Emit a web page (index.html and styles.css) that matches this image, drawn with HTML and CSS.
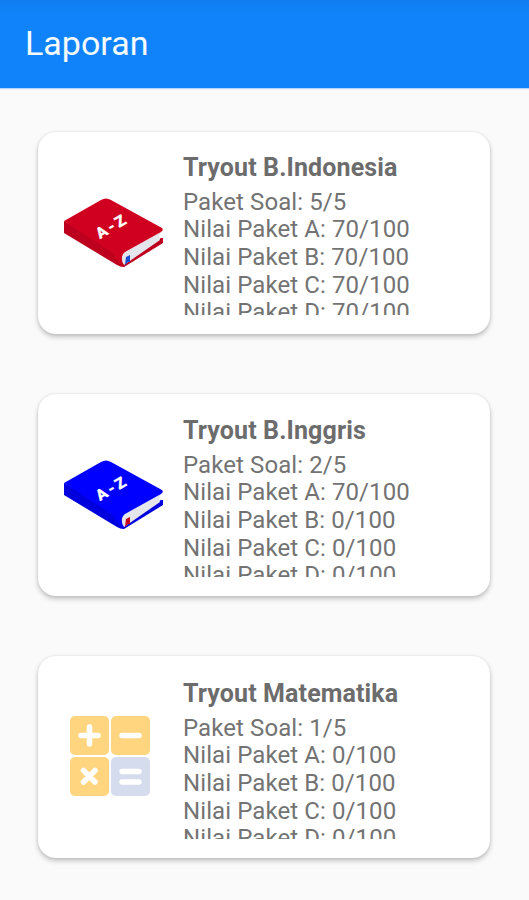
FILE: index.html
```html
<!DOCTYPE html>
<html lang="id">
<head>
<meta charset="utf-8">
<title>Laporan</title>
<link rel="stylesheet" href="styles.css">
</head>
<body>
<header class="appbar"><h1>Laporan</h1></header>
<main class="list">
  <article class="card">
    <svg class="icon book-red" viewBox="0 0 100 72">
      <path class="spine" d="M1 24 L56 54 L61 60 L61 70 Q57 70 54 68 L1 36 Z"/>
      <path class="back" d="M58 62 L98 41 L100 41 V46 L61 70 L57 68 Z"/>
      <path class="pages" d="M60 56 L98 35 Q95 39 97 43 L61 68 Q57 62 60 56 Z"/>
      <path class="cover" d="M1 24 L38 3 Q43 0 48 3 L99 31 Q101 33 98 35 L62 55 Q57 59 59 68 Q54 64 50 56 Z"/>
      <path class="mark" d="M63 60 L67 58 V65 L65 65 L62 68 Z"/>
      <text class="az" transform="matrix(.86 -.5 .55 .8 37 42)">A-Z</text>
    </svg>
    <div class="info">
      <h2>Tryout B.Indonesia</h2>
      <div class="scores"><p>Paket Soal: 5/5</p><p>Nilai Paket A: 70/100</p><p>Nilai Paket B: 70/100</p><p>Nilai Paket C: 70/100</p><p>Nilai Paket D: 70/100</p></div>
    </div>
  </article>
  <article class="card">
    <svg class="icon book-blue" viewBox="0 0 100 72">
      <path class="spine" d="M1 24 L56 54 L61 60 L61 70 Q57 70 54 68 L1 36 Z"/>
      <path class="back" d="M58 62 L98 41 L100 41 V46 L61 70 L57 68 Z"/>
      <path class="pages" d="M60 56 L98 35 Q95 39 97 43 L61 68 Q57 62 60 56 Z"/>
      <path class="cover" d="M1 24 L38 3 Q43 0 48 3 L99 31 Q101 33 98 35 L62 55 Q57 59 59 68 Q54 64 50 56 Z"/>
      <path class="mark" d="M63 60 L67 58 V65 L65 65 L62 68 Z"/>
      <text class="az" transform="matrix(.86 -.5 .55 .8 37 42)">A-Z</text>
    </svg>
    <div class="info">
      <h2>Tryout B.Inggris</h2>
      <div class="scores"><p>Paket Soal: 2/5</p><p>Nilai Paket A: 70/100</p><p>Nilai Paket B: 0/100</p><p>Nilai Paket C: 0/100</p><p>Nilai Paket D: 0/100</p></div>
    </div>
  </article>
  <article class="card">
    <svg class="icon math" viewBox="0 0 100 82">
      <g class="keys"><rect x="7" y="1" width="39" height="39" rx="5"/><rect x="48" y="1" width="39" height="39" rx="5"/><rect x="7" y="42" width="39" height="39" rx="5"/></g>
      <rect class="equals" x="48" y="42" width="39" height="39" rx="5"/>
      <path class="signs" d="M18 20.500H35M26.500 12V29M59 20.500H76M20.500 55.500L32 67M32 55.500L20.500 67M59 56.500H76M59 67H76"/>
    </svg>
    <div class="info">
      <h2>Tryout Matematika</h2>
      <div class="scores"><p>Paket Soal: 1/5</p><p>Nilai Paket A: 0/100</p><p>Nilai Paket B: 0/100</p><p>Nilai Paket C: 0/100</p><p>Nilai Paket D: 0/100</p></div>
    </div>
  </article>
</main>
</body>
</html>
```
FILE: styles.css
```css
* { box-sizing: border-box; }
body { margin: 0; height: 900px; overflow: hidden; background: #fafafa; color: #737373; font-family: Roboto, sans-serif; }
h1, h2, p { margin: 0; }
.appbar { height: 88px; padding: 23px 25px 0; background: linear-gradient(#0f7df0, #1083fa 14px); box-shadow: 0 1px 1px #b5d5f8; }
.appbar h1 { color: #f4faff; font-size: 34px; line-height: 40px; font-weight: 400; letter-spacing: 0; }
.list { display: grid; grid-auto-rows: 202px; gap: 60px; padding: 44px 39px 0 38px; }
.card { display: flex; align-items: flex-start; gap: 20px; padding: 20px 20px 19px 25px; border-radius: 18px; background: #fff; box-shadow: 0 3px 5px rgba(0,0,0,.22), 0 0 3px rgba(0,0,0,.1); }
.icon { flex: none; width: 100px; height: 72px; margin-top: 45px; }
.icon.math { height: 82px; margin-top: 39px; }
.info { height: 163px; padding-top: 1px; overflow: hidden; flex: 1; }
.card:nth-child(2) .info { padding-top: 2px; }
.card:nth-child(3) .info { padding-top: 3px; }
.info h2 { height: 35.500px; font-size: 25px; line-height: 30px; font-weight: 700; letter-spacing: .12px; color: #6c6c6c; white-space: nowrap; }
.scores { font-size: 24px; line-height: 27.700px; letter-spacing: .09px; }
.book-red { --cover: #d00020; --side: #bd001d; --mark: #174fd0; }
.book-blue { --cover: #0000ff; --side: #0000df; --mark: #c60018; }
.cover { fill: var(--cover); }
.spine, .back { fill: var(--side); }
.pages { fill: #e5e5ec; }
.mark { fill: var(--mark); }
.az { fill: #fff; stroke: #fff; stroke-width: .5; font: 700 15.500px Roboto, sans-serif; letter-spacing: 3px; }
.keys { fill: #ffd57f; }
.equals { fill: #d5dced; }
.signs { fill: none; stroke: #fff; stroke-width: 5.500; stroke-linecap: round; }
```
